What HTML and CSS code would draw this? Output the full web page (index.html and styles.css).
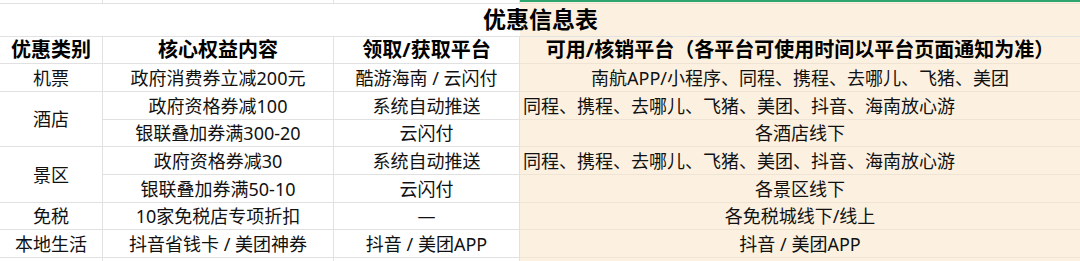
FILE: index.html
```html
<!DOCTYPE html>
<html lang="zh-CN">
<head>
<meta charset="utf-8">
<title>优惠信息表</title>
<link rel="stylesheet" href="styles.css">
</head>
<body>
<div class="sheet">
  <div class="cell strip"></div>
  <div class="cell strip"></div>
  <div class="cell strip"></div>
  <div class="cell strip beige sel"></div>

  <div class="cell title">优惠信息表</div>

  <div class="cell head">优惠类别</div>
  <div class="cell head">核心权益内容</div>
  <div class="cell head">领取/获取平台</div>
  <div class="cell head beige">可用/核销平台（各平台可使用时间以平台页面通知为准）</div>

  <div class="cell">机票</div>
  <div class="cell">政府消费券立减200元</div>
  <div class="cell">酷游海南 / 云闪付</div>
  <div class="cell beige">南航APP/小程序、同程、携程、去哪儿、飞猪、美团</div>

  <div class="cell span2">酒店</div>
  <div class="cell">政府资格券减100</div>
  <div class="cell">系统自动推送</div>
  <div class="cell beige left">同程、携程、去哪儿、飞猪、美团、抖音、海南放心游</div>
  <div class="cell">银联叠加券满300-20</div>
  <div class="cell">云闪付</div>
  <div class="cell beige">各酒店线下</div>

  <div class="cell span2">景区</div>
  <div class="cell">政府资格券减30</div>
  <div class="cell">系统自动推送</div>
  <div class="cell beige left">同程、携程、去哪儿、飞猪、美团、抖音、海南放心游</div>
  <div class="cell">银联叠加券满50-10</div>
  <div class="cell">云闪付</div>
  <div class="cell beige">各景区线下</div>

  <div class="cell">免税</div>
  <div class="cell">10家免税店专项折扣</div>
  <div class="cell">—</div>
  <div class="cell beige">各免税城线下/线上</div>

  <div class="cell">本地生活</div>
  <div class="cell">抖音省钱卡 / 美团神券</div>
  <div class="cell">抖音 / 美团APP</div>
  <div class="cell beige">抖音 / 美团APP</div>

  <div class="cell"></div>
  <div class="cell"></div>
  <div class="cell"></div>
  <div class="cell beige"></div>
</div>
</body>
</html>
```
FILE: styles.css
```css
html, body {
  margin: 0;
  padding: 0;
  background: #ffffff;
}

body {
  font-family: "Noto Sans", "Noto Sans CJK SC", sans-serif;
  color: #111111;
  overflow: hidden;
}

.sheet {
  display: grid;
  width: 1081px;
  grid-template-columns: 103px 231px 186px 561px;
  grid-template-rows: 4px 33px 27px 28px 28px 27px 28px 28px 27px 28px 10px;
}

.cell {
  box-sizing: border-box;
  border-right: 1px solid #e1e1e1;
  border-bottom: 1px solid #e1e1e1;
  display: flex;
  align-items: center;
  justify-content: center;
  font-size: 18px;
  line-height: 1;
  white-space: nowrap;
  overflow: hidden;
  background: #ffffff;
}

.beige {
  background: #fcf1e1;
  border-color: #efe4d3;
}

.strip.sel {
  border-top: 2px solid #2ea56f;
}

.title {
  grid-column: 1 / -1;
  font-size: 23px;
  font-weight: 700;
  color: #000;
  border-right: none;
  background: linear-gradient(to right, #ffffff 520px, #fcf1e1 520px);
  padding-bottom: 1px;
}

.head {
  font-size: 20px;
  font-weight: 700;
  color: #000;
}

.span2 {
  grid-row: span 2;
}

.left {
  justify-content: flex-start;
  padding-left: 3px;
}
```
